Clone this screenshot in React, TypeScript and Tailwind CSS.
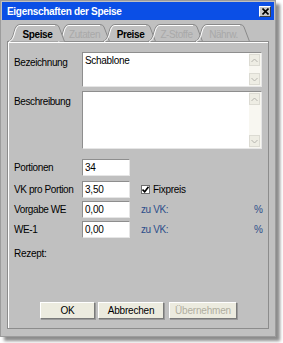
import React from 'react';

const font = { fontFamily: '"Liberation Sans", Arial, sans-serif' };

type TabProps = { label: string; width: number; active?: boolean; disabled?: boolean; z: string; ml: string };

const Tab = ({ label, width, active, disabled, z, ml }: TabProps) => (
  <div className={`relative h-[18px] ${z} ${ml}`} style={{ width }}>
    <svg className="absolute inset-0" width={width} height={19} viewBox={`0 0 ${width} 19`}>
      <path
        d={`M0.5 18.5 Q5 18 7 9 Q8.5 1.5 13 1.5 L${width - 10} 1.5 Q${width - 7} 1.5 ${width - 6} 4 L${width - 0.5} 18.5`}
        fill={active ? '#c0c0c0' : 'none'}
        stroke="#8a8a8a"
      />
      <path d={`M2 18.5 Q6 18 8 9 Q9.5 2.5 13 2.5 L${width - 10} 2.5`} fill="none" stroke="#ffffff" />
    </svg>
    <span
      className={`relative flex h-full items-center justify-center whitespace-nowrap pt-[4px] pl-[3px] text-[10px] tracking-[-0.4px] ${
        disabled ? 'text-[#a9a9a9]' : 'font-bold text-black'
      }`}
    >
      {label}
    </span>
  </div>
);

const ScrollArrow = ({ up }: { up?: boolean }) => (
  <div className="flex h-[12px] w-[11px] items-center justify-center border border-[#dcdbd3] bg-[#eeede4]">
    <svg width="7" height="5" viewBox="0 0 7 5">
      <path d={up ? 'M0.5 4 L3.5 1 L6.5 4' : 'M0.5 1 L3.5 4 L6.5 1'} fill="none" stroke="#b5b4ae" strokeWidth="1" />
    </svg>
  </div>
);

const TextArea = ({ value, height }: { value?: string; height: string }) => (
  <div className={`flex w-[180px] ${height} border border-t-[#8e8e8e] border-l-[#8e8e8e] border-r-[#e6e6e6] border-b-[#e6e6e6] bg-white`}>
    <div className="flex-1 px-[2px] pt-[1px] text-[10px] leading-[13px] tracking-[-0.3px] text-black">{value}</div>
    <div className="flex w-[12px] flex-col justify-between bg-[#f8f7f1] pt-[1px] pb-[1px]">
      <ScrollArrow up />
      <ScrollArrow />
    </div>
  </div>
);

const Input = ({ value }: { value: string }) => (
  <div className="flex h-[17px] w-[48px] items-center border border-t-[#8e8e8e] border-l-[#8e8e8e] border-r-[#e6e6e6] border-b-[#e6e6e6] bg-white px-[2px] text-[10px] tracking-[-0.2px] text-black">
    {value}
  </div>
);

const Btn = ({ label, width, disabled }: { label: string; width: string; disabled?: boolean }) => (
  <div
    className={`flex h-[17px] ${width} items-center justify-center border border-t-white border-l-white border-r-[#7a7a7a] border-b-[#7a7a7a] bg-[#ecebdf] text-[10px] tracking-[-0.2px] shadow-[1px_1px_0_#9a9a9a] ${
      disabled ? 'text-[#b0ae9f]' : 'text-black'
    }`}
  >
    {label}
  </div>
);

const Label = ({ children, top }: { children: React.ReactNode; top?: boolean }) => (
  <span className={`w-[68px] shrink-0 whitespace-nowrap text-[10px] tracking-[-0.4px] text-black ${top ? 'pt-[3px]' : ''}`}>
    {children}
  </span>
);

export default function App() {
  return (
    <div className="h-[343px] w-[283px] bg-white" style={font}>
      <div className="flex h-[337px] w-[276px] flex-col border border-[#9c9c9c] bg-[#c0c0c0] shadow-[4px_4px_3px_rgba(0,0,0,0.45)]">
        {/* Title bar */}
        <div className="mx-[1px] mt-[1px] flex h-[18px] items-center justify-between bg-[#0b4fe6] pl-[5px] pr-[3px]">
          <span className="text-[10px] font-bold tracking-[-0.3px] text-white">Eigenschaften der Speise</span>
          <div className="flex h-[11px] w-[12px] items-center justify-center border border-t-white border-l-white border-r-[#404040] border-b-[#404040] bg-[#c8c8c8]">
            <svg width="7" height="7" viewBox="0 0 7 7">
              <path d="M0.5 0.5 L6.5 6.5 M6.5 0.5 L0.5 6.5" stroke="#000" strokeWidth="1.6" />
            </svg>
          </div>
        </div>

        {/* Tabs */}
        <div className="mt-[3px] flex pl-[6px]">
          <Tab label="Speise" width={58} active z="z-20" ml="" />
          <Tab label="Zutaten" width={54} disabled z="z-10" ml="-ml-[9px]" />
          <Tab label="Preise" width={54} z="z-10" ml="-ml-[8px]" />
          <Tab label="Z-Stoffe" width={56} disabled z="z-10" ml="-ml-[9px]" />
          <Tab label="Nährw." width={56} disabled z="z-10" ml="-ml-[9px]" />
        </div>

        {/* Panel */}
        <div className="mx-[6px] flex h-[288px] flex-col border border-[#8c8c8c] pl-[6px] shadow-[inset_1px_1px_0_#ffffff]">
          <div className="mt-[10px] flex">
            <Label top>Bezeichnung</Label>
            <TextArea value="Schablone" height="h-[35px]" />
          </div>
          <div className="mt-[4px] flex">
            <Label top>Beschreibung</Label>
            <TextArea height="h-[58px]" />
          </div>

          <div className="mt-[10px] flex items-center">
            <Label>Portionen</Label>
            <Input value="34" />
          </div>
          <div className="mt-[5px] flex items-center">
            <Label>VK pro Portion</Label>
            <Input value="3,50" />
            <div className="ml-[11px] flex items-center">
              <div className="flex h-[9px] w-[9px] items-center justify-center border border-[#6e6e6e] bg-white">
                <svg width="7" height="7" viewBox="0 0 7 7">
                  <path d="M0.5 3.5 L2.7 5.8 L6.5 0.8" fill="none" stroke="#000" strokeWidth="1.6" />
                </svg>
              </div>
              <span className="ml-[3px] text-[10px] tracking-[-0.3px] text-black">Fixpreis</span>
            </div>
          </div>
          <div className="mt-[3px] flex items-center">
            <Label>Vorgabe WE</Label>
            <Input value="0,00" />
            <span className="ml-[11px] w-[113px] text-[10px] tracking-[-0.4px] text-[#2c4d8a]">zu VK:</span>
            <span className="text-[10px] text-[#2c4d8a]">%</span>
          </div>
          <div className="mt-[3px] flex items-center">
            <Label>WE-1</Label>
            <Input value="0,00" />
            <span className="ml-[11px] w-[113px] text-[10px] tracking-[-0.4px] text-[#2c4d8a]">zu VK:</span>
            <span className="text-[10px] text-[#2c4d8a]">%</span>
          </div>
          <div className="mt-[8px] text-[10px] tracking-[-0.3px] text-black">Rezept:</div>

          <div className="mt-auto mb-[9px] flex gap-[3px] pl-[26px]">
            <Btn label="OK" width="w-[55px]" />
            <Btn label="Abbrechen" width="w-[66px]" />
            <div className="ml-[2px]">
              <Btn label="Übernehmen" width="w-[68px]" disabled />
            </div>
          </div>
        </div>
      </div>
    </div>
  );
}
